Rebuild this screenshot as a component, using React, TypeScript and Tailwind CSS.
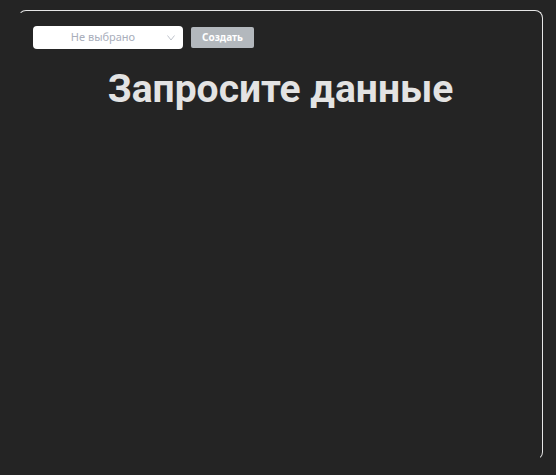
export default function App() {
  return (
    <div className="min-h-[475px] w-full bg-[#242424] pt-[10px] pl-[18px] font-['Noto_Sans',sans-serif]">
      {/* 카드 */}
      <div className="w-[525px] h-[450px] rounded-[8px] border border-t-[#e6e6e6] border-r-[#e6e6e6] border-l-transparent border-b-transparent pt-[15px] pl-[14px]">
        <div className="flex items-center gap-2">
          <div className="relative w-[150px] h-[23px] rounded-[4px] bg-white flex items-center justify-center">
            <span className="text-[11px] text-[#a9aebb] -ml-[10px]">Не выбрано</span>
            <svg className="absolute right-[8px] top-[9px]" width="8" height="6" viewBox="0 0 8 6" fill="none">
              <path d="M0.5 0.5 L4 5 L7.5 0.5" stroke="#b9bdc6" strokeWidth="0.9" />
            </svg>
          </div>
          <button className="w-[63px] h-[21px] rounded-[2px] bg-[#b3b8bd] text-white text-[10px] font-bold">
            Создать
          </button>
        </div>
        <h1 className="mt-[18px] text-center text-[39px] leading-[44px] font-bold text-[#e3e3e3] -ml-[14px] font-['Roboto',sans-serif]">
          Запросите данные
        </h1>
      </div>
    </div>
  );
}
